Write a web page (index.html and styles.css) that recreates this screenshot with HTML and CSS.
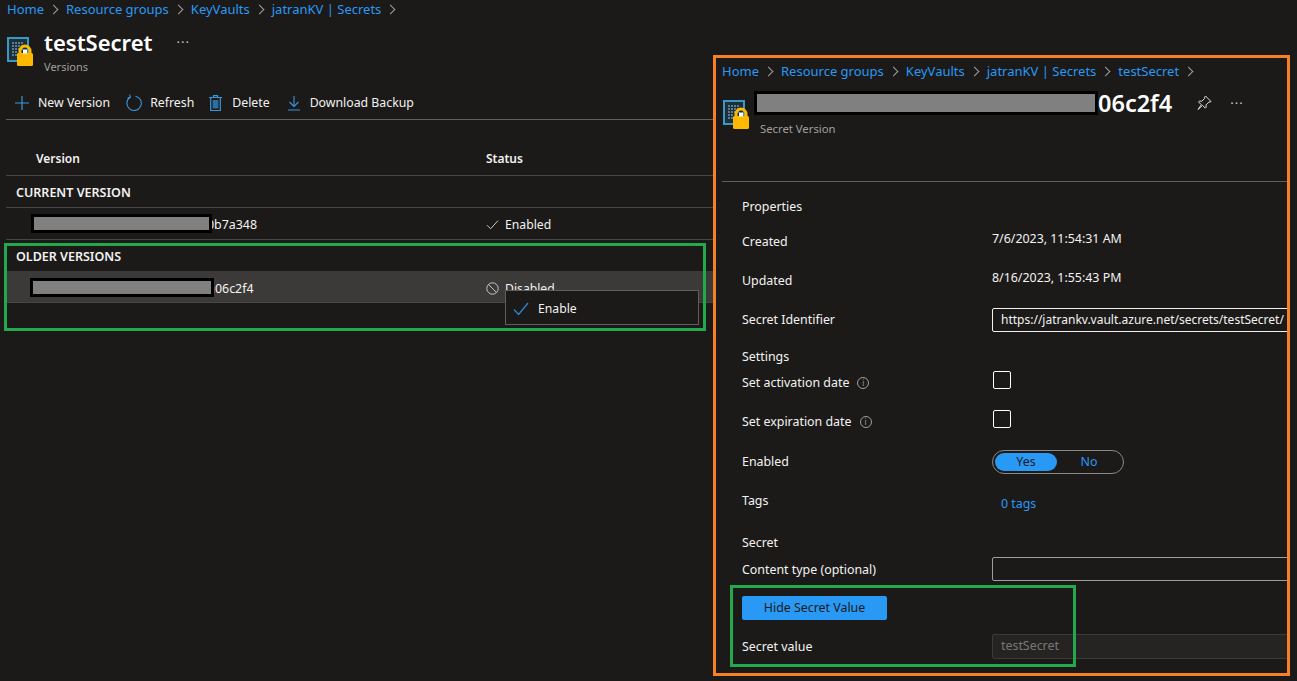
FILE: index.html
```html
<!DOCTYPE html>
<html lang="en">
<head>
<meta charset="utf-8">
<title>testSecret versions</title>
<link rel="stylesheet" href="styles.css">
</head>
<body>
<svg class="defs" width="0" height="0" aria-hidden="true">
  <symbol id="kv" viewBox="0 0 28 30">
    <rect x="1" y="1" width="20" height="23" fill="#1f2f38" stroke="#3999c6" stroke-width="2"/>
    <g fill="#5a7f92">
      <rect x="5" y="5" width="2" height="2"/><rect x="8" y="5" width="2" height="2"/><rect x="11" y="5" width="2" height="2"/><rect x="14" y="5" width="2" height="2"/>
      <rect x="5" y="8" width="2" height="2"/><rect x="8" y="8" width="2" height="2"/><rect x="11" y="8" width="2" height="2"/><rect x="14" y="8" width="2" height="2"/>
      <rect x="5" y="11" width="2" height="2"/><rect x="8" y="11" width="2" height="2"/><rect x="11" y="11" width="2" height="2"/><rect x="14" y="11" width="2" height="2"/>
      <rect x="5" y="14" width="2" height="2"/><rect x="8" y="14" width="2" height="2"/>
      <rect x="5" y="17" width="2" height="2"/><rect x="8" y="17" width="2" height="2"/>
    </g>
    <path d="M13 17v-3a5 5 0 0 1 10 0v3" fill="none" stroke="#ffb900" stroke-width="3"/>
    <rect x="10" y="16" width="16" height="13" rx="1.5" fill="#ffb900"/>
    <rect x="16" y="12.5" width="4" height="4" fill="#fff"/>
  </symbol>
</svg>

<main class="blade">
  <nav class="crumbs">
    <a>Home</a><span class="sep"></span><a>Resource groups</a><span class="sep"></span><a>KeyVaults</a><span class="sep"></span><a>jatranKV | Secrets</a><span class="sep"></span>
  </nav>
  <header class="title-row">
    <svg class="kv-icon"><use href="#kv"/></svg>
    <div class="title-text">
      <div class="title-line"><h1>testSecret</h1><span class="dots">···</span></div>
      <div class="subtitle">Versions</div>
    </div>
  </header>
  <div class="toolbar">
    <button class="tool tool-new">
      <svg width="16" height="16" viewBox="0 0 16 16"><path d="M8 1v14M1 8h14" stroke="#3a96dd" stroke-width="1.2" fill="none"/></svg>New Version
    </button>
    <button class="tool tool-refresh">
      <svg width="17" height="18" viewBox="0 0 17 18"><path d="M5.2 3.2A7.2 7.2 0 1 0 10.5 2.2M4.6 0.6l.8 2.8-2.8.7" stroke="#3a96dd" stroke-width="1.1" fill="none"/></svg>Refresh
    </button>
    <button class="tool tool-delete">
      <svg width="13" height="16" viewBox="0 0 13 16"><path d="M0 2.5h13M4.5 2.5V.7h4v1.8M1.7 2.5v13h9.6v-13" stroke="#3a96dd" stroke-width="1.2" fill="none"/><rect x="3.6" y="5" width="5.8" height="8.5" fill="#2a6f9f"/></svg>Delete
    </button>
    <button class="tool tool-down">
      <svg width="12" height="16" viewBox="0 0 12 16"><path d="M6 1v10M1.5 7L6 11.5 10.5 7M0 15h12" stroke="#3a96dd" stroke-width="1.1" fill="none"/></svg>Download Backup
    </button>
  </div>

  <section class="table">
    <div class="cols head"><span class="c1">Version</span><span>Status</span></div>
    <div class="group">CURRENT VERSION</div>
    <div class="cols row">
      <span class="c-id id-a"><span class="redact redact-a"></span>0b7a348</span>
      <span class="status">
        <svg width="13" height="13" viewBox="0 0 13 13"><path d="M1 7.2l3.6 3.6L12 2.6" stroke="#c8c6c4" stroke-width="1" fill="none"/></svg>Enabled
      </span>
    </div>
    <div class="group group-old">OLDER VERSIONS</div>
    <div class="cols row row-hi">
      <span class="c-id id-b"><span class="redact redact-b"></span>a06c2f4</span>
      <span class="status">
        <svg width="13" height="13" viewBox="0 0 13 13"><circle cx="6.5" cy="6.5" r="5.7" stroke="#c8c6c4" fill="none"/><path d="M2.5 2.5l8 8" stroke="#c8c6c4" fill="none"/></svg>Disabled
      </span>
    </div>
  </section>
</main>

<div class="menu">
  <svg width="16" height="14" viewBox="0 0 16 14"><path d="M1 7.5l4.6 5L15 1" stroke="#2b88d8" stroke-width="1.2" fill="none"/></svg>
  <span>Enable</span>
</div>
<div class="mark mark-older"></div>

<aside class="panel">
  <nav class="crumbs crumbs-panel">
    <a>Home</a><span class="sep"></span><a>Resource groups</a><span class="sep"></span><a>KeyVaults</a><span class="sep"></span><a>jatranKV | Secrets</a><span class="sep"></span><a>testSecret</a><span class="sep"></span>
  </nav>
  <header class="panel-head">
    <svg class="kv-icon kv-panel"><use href="#kv"/></svg>
    <div class="panel-titles">
      <div class="panel-title"><span class="redact redact-title"></span><h2>06c2f4</h2>
        <svg class="pin" width="16" height="16" viewBox="0 0 16 16"><path d="M9.500 1l5.500 5.500-1 .6-1-.2-3 3 .1 2.400-.8.9-2.800-2.900L2 14.500l3.300-4.800-2.800-2.800.9-.8 2.400.1 3-3-.2-1z" stroke="#e1dfdd" fill="none"/></svg>
        <span class="dots dots-panel">···</span>
      </div>
      <div class="subtitle subtitle-panel">Secret Version</div>
    </div>
  </header>
  <div class="rule"></div>
  <div class="form">
    <div class="f first"><span>Properties</span></div>
    <div class="f near"><span>Created</span><span class="up">7/6/2023, 11:54:31 AM</span></div>
    <div class="f"><span>Updated</span><span class="up">8/16/2023, 1:55:43 PM</span></div>
    <div class="f"><span>Secret Identifier</span><div class="input input-id">https://jatrankv.vault.azure.net/secrets/testSecret/</div></div>
    <div class="f settings"><span>Settings</span></div>
    <div class="f tight"><span class="lab">Set activation date<i class="info">i</i></span><span class="check"></span></div>
    <div class="f"><span class="lab">Set expiration date<i class="info">i</i></span><span class="check"></span></div>
    <div class="f enabled"><span>Enabled</span>
      <div class="toggle"><span class="yes">Yes</span><span class="no">No</span></div></div>
    <div class="f"><span>Tags</span><a class="tags">0 tags</a></div>
    <div class="f wide"><span>Secret</span></div>
    <div class="f tight"><span>Content type (optional)</span><div class="input input-ct"></div></div>
    <div class="f"><button class="primary">Hide Secret Value</button></div>
    <div class="f last"><span>Secret value</span><div class="input input-off">testSecret</div></div>
  </div>
  <div class="mark mark-secret"></div>
</aside>
</body>
</html>
```

FILE: styles.css
```css
* { box-sizing: border-box; }
html, body { margin: 0; height: 100%; }
body {
  position: relative;
  overflow: hidden;
  background: #1b1a19;
  color: #f3f2f1;
  font: 13px/18px "Noto Sans", "Open Sans", sans-serif;
}
.defs { position: absolute; }
h1, h2 { margin: 0; font-weight: 600; color: #fff; }
button { font: inherit; color: inherit; background: none; border: 0; padding: 0; }

.blade { width: 713px; padding-left: 6px; }

.crumbs { display: flex; align-items: center; height: 18px; color: #2899f5; }
.blade > .crumbs { padding-left: 1px; }
.sep {
  width: 7px; height: 7px; margin: 0 9px 0 6px;
  border-top: 1px solid #a19f9d; border-right: 1px solid #a19f9d;
  transform: rotate(45deg);
}

.title-row { display: flex; margin-top: 9px; padding-left: 1px; height: 55px; }
.kv-icon { width: 28px; height: 30px; margin-top: 10px; flex: none; }
.title-text { margin-left: 9px; }
.title-line { display: flex; align-items: center; height: 30px; }
h1 { font-size: 22px; line-height: 30px; }
.dots { margin-left: 24px; color: #c8c6c4; font-size: 13px; letter-spacing: 1px; }
.subtitle { font-size: 11px; line-height: 16px; margin-top: 2px; color: #a19f9d; }

.toolbar {
  display: flex; align-items: center;
  height: 34px;
  margin-top: 4px;
  font-size: 12.3px;
  border-bottom: 1px solid #605e5c;
}
.tool { display: flex; align-items: center; }
.tool-new { margin-left: 8px; }
.tool-new svg { margin-right: 8px; }
.tool-refresh { margin-left: 15px; }
.tool-refresh svg { margin-right: 8px; }
.tool-delete { margin-left: 15px; }
.tool-delete svg { margin-right: 10px; }
.tool-down { margin-left: 18px; }
.tool-down svg { margin-right: 10px; }

.table { margin-top: 25px; }
.cols { display: grid; grid-template-columns: 480px 1fr; align-items: center; }
.head { height: 31px; padding-bottom: 2px; border-bottom: 1px solid #484644; font-weight: 600; font-size: 12px; }
.c1 { padding-left: 30px; }
.group { height: 32px; padding: 1px 0 0 10px; line-height: 32px; font-weight: 600; font-size: 12.5px; border-bottom: 1px solid #484644; }
.row { height: 32px; padding-top: 2px; border-bottom: 1px solid #484644; }
.group-old { height: 31px; border-bottom: 0; }
.row-hi { padding-top: 4px; background: #3b3a39; margin-left: -1px; padding-left: 1px; border-bottom-color: #484644; }

.c-id { display: flex; align-items: center; font-size: 12.4px; }
.id-a { padding-left: 25px; }
.id-b { padding-left: 24px; }
.redact {
  position: relative; z-index: 1; flex: none; display: inline-block;
  background: #808080; border: 3px solid #000;
}
.redact-a { width: 181px; height: 19px; margin: 0 -5px 3px 0; }
.redact-b { width: 184px; height: 19px; margin: 0 -6px 3px 0; }
.redact-title { width: 344px; height: 24px; }
.status { display: flex; align-items: center; gap: 6px; font-size: 12.2px; }

.menu {
  position: absolute; left: 505px; top: 290px;
  width: 194px; height: 35px;
  display: flex; align-items: center; gap: 9px;
  padding: 2px 0 0 7px;
  background: #1b1a19; border: 1px solid #605e5c;
  font-size: 12.2px;
}
.mark { position: absolute; border: 3px solid #23a94b; pointer-events: none; }
.mark-older { left: 4px; top: 243px; width: 702px; height: 88px; }
.mark-secret { left: 14px; top: 527px; width: 346px; height: 82px; }

.panel {
  position: absolute; left: 713px; top: 55px;
  width: 577px; height: 621px;
  background: #1b1a19;
  border: 3px solid #f58025;
  overflow: hidden;
}
.crumbs-panel { margin: 4px 0 0 6px; }
.panel-head { display: flex; height: 99px; padding-left: 7px; margin-top: 2px; }
.kv-panel { margin-top: 18px; }
.panel-titles { margin-left: 3px; margin-top: 8px; }
.panel-title { display: flex; align-items: center; height: 26px; }
h2 { font-size: 23.5px; line-height: 26px; }
.pin { margin-left: 24px; }
.dots-panel { margin-left: 18px; }
.subtitle-panel { margin: 5px 0 0 6px; font-size: 11.3px; }
.rule { height: 1px; margin-left: 6px; background: #605e5c; }

.form { padding-left: 26px; margin-top: 13px; }
.f {
  display: grid; grid-template-columns: 250px 1fr; align-items: center;
  height: 24px; margin-top: 15px; font-size: 12.4px; white-space: nowrap;
}
.f.first { margin-top: 0; }
.f.near { margin-top: 11px; }
.f.settings { margin-top: 13px; }
.f.tight { margin-top: 2px; }
.f.enabled { margin-top: 16px; }
.f.wide { margin-top: 18px; }
.f.last { margin-top: 14px; }
.up { margin-bottom: 6px; }
.lab { display: flex; align-items: center; }
.info {
  width: 12px; height: 12px; margin-left: 8px;
  border: 1px solid #a19f9d; border-radius: 50%;
  font: normal 8px/10px "Noto Sans", sans-serif; color: #a19f9d; text-align: center;
}
.input { height: 24px; padding: 0 8px; line-height: 22px; border: 1px solid #c8c6c4; border-radius: 2px; overflow: hidden; }
.input-id, .input-ct, .input-off { width: 320px; }
.input-id { border-color: #f3f2f1; font-size: 12px; }
.input-ct { border-color: #a19f9d; margin-bottom: 2px; }
.input-off { height: 25px; background: #252423; border-color: #3b3a39; color: #797775; }
.check { width: 18px; height: 18px; margin: 0 0 6px 1px; border: 1px solid #fff; border-radius: 2px; }
.toggle {
  display: flex; align-items: center;
  width: 132px; height: 24px; padding: 0 2px;
  border: 1px solid #8a8886; border-radius: 12px;
}
.yes { width: 62px; height: 18px; line-height: 18px; background: #2899f5; color: #1b1a19; border-radius: 9px; text-align: center; }
.no { flex: 1; text-align: center; color: #2899f5; }
.tags { color: #2899f5; padding-left: 9px; margin-top: 6px; }
.primary { width: 145px; height: 24px; margin-bottom: 2px; background: #2899f5; color: #1b1a19; border-radius: 2px; }
```
